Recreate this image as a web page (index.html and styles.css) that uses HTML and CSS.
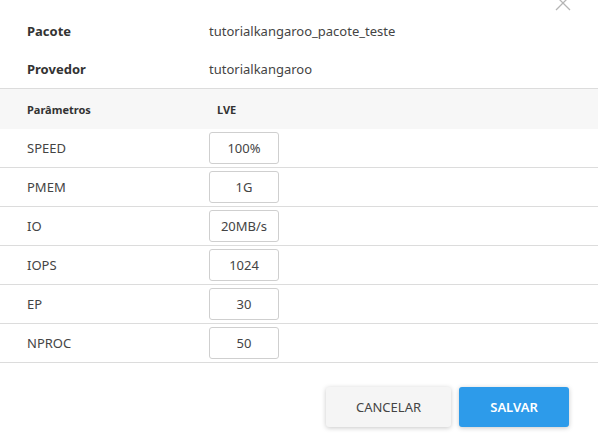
FILE: index.html
```html
<!DOCTYPE html>
<html lang="pt">
<head>
<meta charset="utf-8">
<link rel="stylesheet" href="styles.css">
</head>
<body>
<div class="modal">
  <button class="close" aria-label="Fechar">
    <svg width="16" height="16" viewBox="0 0 16 16"><path d="M1 1 L15 15 M15 1 L1 15" stroke="#b5b5b5" stroke-width="1.3" fill="none"/></svg>
  </button>
  <div class="info">
    <div class="info-row"><span class="info-label">Pacote</span><span class="info-value">tutorialkangaroo_pacote_teste</span></div>
    <div class="info-row"><span class="info-label">Provedor</span><span class="info-value">tutorialkangaroo</span></div>
  </div>
  <div class="table">
    <div class="thead">
      <span class="col-name">Parâmetros</span>
      <span class="col-val">LVE</span>
    </div>
    <div class="trow"><span class="col-name">SPEED</span><span class="col-val"><input class="field" value="100%"></span></div>
    <div class="trow"><span class="col-name">PMEM</span><span class="col-val"><input class="field" value="1G"></span></div>
    <div class="trow"><span class="col-name">IO</span><span class="col-val"><input class="field" value="20MB/s"></span></div>
    <div class="trow"><span class="col-name">IOPS</span><span class="col-val"><input class="field" value="1024"></span></div>
    <div class="trow"><span class="col-name">EP</span><span class="col-val"><input class="field" value="30"></span></div>
    <div class="trow"><span class="col-name">NPROC</span><span class="col-val"><input class="field" value="50"></span></div>
  </div>
  <div class="footer">
    <button class="btn btn-cancel">CANCELAR</button>
    <button class="btn btn-save">SALVAR</button>
  </div>
</div>
</body>
</html>
```
FILE: styles.css
```css
* { box-sizing: border-box; }
html, body {
  margin: 0;
  padding: 0;
  background: #fff;
}
body {
  font-family: "Noto Sans", "Open Sans", sans-serif;
  font-size: 13px;
  color: #444;
  width: 598px;
  height: 443px;
  overflow: hidden;
}
.modal {
  position: relative;
  padding-top: 12px;
}
.close {
  position: absolute;
  top: -5px;
  left: 555px;
  width: 16px;
  height: 16px;
  padding: 0;
  border: 0;
  background: none;
}
.close svg { display: block; }
.info-row {
  display: flex;
  align-items: center;
  height: 38px;
  padding-left: 27px;
}
.info-label {
  width: 182px;
  font-weight: 700;
  color: #333;
}
.info-value { color: #444; }
.table { border-top: 1px solid #dcdcdc; }
.thead {
  display: flex;
  align-items: center;
  height: 40px;
  background: #f7f7f7;
  padding-left: 27px;
  font-size: 11px;
  font-weight: 700;
  color: #333;
}
.thead .col-val { padding-left: 8px; }
.trow {
  display: flex;
  align-items: center;
  height: 39px;
  padding-left: 27px;
  border-bottom: 1px solid #dcdcdc;
}
.col-name { width: 182px; }
.col-val { display: flex; }
.field {
  width: 70px;
  height: 32px;
  border: 1px solid #cfcfcf;
  border-radius: 3px;
  font-family: inherit;
  font-size: 13px;
  color: #444;
  text-align: center;
  padding: 0;
  background: #fff;
}
.footer {
  display: flex;
  justify-content: flex-end;
  gap: 8px;
  padding: 24px 29px 0 0;
}
.btn {
  height: 40px;
  border: 0;
  border-radius: 3px;
  font-family: inherit;
  font-size: 13px;
  box-shadow: 0 1px 5px rgba(0,0,0,0.22);
}
.btn-cancel {
  width: 125px;
  background: #f5f5f5;
  color: #444;
}
.btn-save {
  width: 110px;
  background: #2d9bea;
  color: #fff;
  font-weight: 600;
}
```
